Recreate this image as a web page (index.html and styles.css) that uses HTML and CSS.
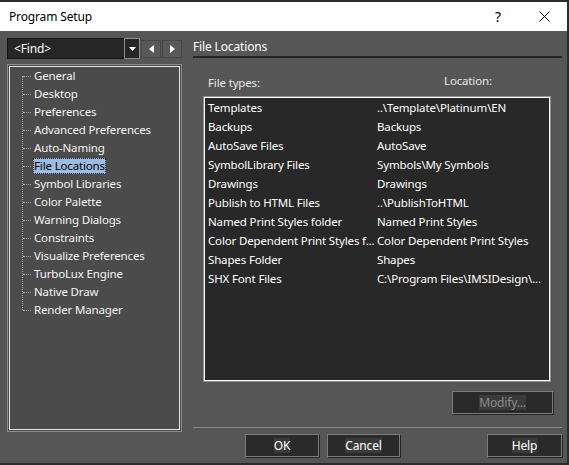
FILE: index.html
```html
<!DOCTYPE html>
<html lang="en">
<head>
  <meta charset="UTF-8" />
  <title>Program Setup</title>
  <link rel="stylesheet" href="styles.css">
</head>
<body>
  <div class="window">
    <div class="titlebar">
      <span class="title">Program Setup</span>
      <span class="cap-btn help">?</span>
      <span class="cap-btn close">
        <svg width="11" height="11" viewBox="0 0 11 11"><path d="M0.5 0.5 L10.5 10.5 M10.5 0.5 L0.5 10.5" stroke="#000" stroke-width="1" fill="none"/></svg>
      </span>
    </div>

    <div class="client">
      <div class="nav">
        <div class="findrow">
          <div class="combo">
            <span class="combo-text">&lt;Find&gt;</span>
            <span class="combo-btn">
              <svg width="7" height="4" viewBox="0 0 7 4"><path d="M0 0 H7 L3.5 4 Z" fill="#fff"/></svg>
            </span>
          </div>
          <span class="step">
            <svg width="5" height="8" viewBox="0 0 5 8"><path d="M5 0 V8 L0 4 Z" fill="#fff"/></svg>
          </span>
          <span class="step">
            <svg width="5" height="8" viewBox="0 0 5 8"><path d="M0 0 V8 L5 4 Z" fill="#fff"/></svg>
          </span>
        </div>

        <div class="tree">
          <ul>
            <li><span class="node">General</span></li>
            <li><span class="node">Desktop</span></li>
            <li><span class="node">Preferences</span></li>
            <li><span class="node">Advanced Preferences</span></li>
            <li><span class="node">Auto-Naming</span></li>
            <li><span class="node selected">File Locations</span></li>
            <li><span class="node">Symbol Libraries</span></li>
            <li><span class="node">Color Palette</span></li>
            <li><span class="node">Warning Dialogs</span></li>
            <li><span class="node">Constraints</span></li>
            <li><span class="node">Visualize Preferences</span></li>
            <li><span class="node">TurboLux Engine</span></li>
            <li><span class="node">Native Draw</span></li>
            <li><span class="node">Render Manager</span></li>
          </ul>
        </div>
      </div>

      <div class="page">
        <div class="page-title">File Locations</div>

        <div class="cols-head">
          <span class="head-types">File types:</span>
          <span class="head-loc">Location:</span>
        </div>

        <div class="listbox">
          <div class="row"><span>Templates</span><span>..\Template\Platinum\EN</span></div>
          <div class="row"><span>Backups</span><span>Backups</span></div>
          <div class="row"><span>AutoSave Files</span><span>AutoSave</span></div>
          <div class="row"><span>SymbolLibrary Files</span><span>Symbols\My Symbols</span></div>
          <div class="row"><span>Drawings</span><span>Drawings</span></div>
          <div class="row"><span>Publish to HTML Files</span><span>..\PublishToHTML</span></div>
          <div class="row"><span>Named Print Styles folder</span><span>Named Print Styles</span></div>
          <div class="row"><span>Color Dependent Print Styles f...</span><span>Color Dependent Print Styles</span></div>
          <div class="row"><span>Shapes Folder</span><span>Shapes</span></div>
          <div class="row"><span>SHX Font Files</span><span>C:\Program Files\IMSIDesign\...</span></div>
        </div>

        <div class="modify-row">
          <button class="btn btn-modify" disabled><span class="btn-cap">Modify...</span></button>
        </div>

        <div class="sep"></div>

        <div class="actions">
          <button class="btn btn-ok"><span class="btn-cap">OK</span></button>
          <button class="btn btn-cancel"><span class="btn-cap">Cancel</span></button>
          <button class="btn btn-help"><span class="btn-cap">Help</span></button>
        </div>
      </div>
    </div>
  </div>
</body>
</html>
```

FILE: styles.css
```css
body {
  margin: 0;
  background-color: #2c2c2c;
  font-family: "Noto Sans", "Open Sans", sans-serif;
  font-size: 11.5px;
  letter-spacing: -0.15px;
  color: #fff;
}

.window {
  width: 567px;
  height: 461px;
  margin-top: 2px;
  background-color: #565656;
  display: flex;
  flex-direction: column;
}

/* caption */
.titlebar {
  height: 29px;
  flex: none;
  background-color: #fff;
  color: #000;
  display: flex;
  align-items: center;
  padding-left: 9px;
  font-size: 12px;
}

.title {
  flex: 1;
}

.cap-btn {
  width: 46px;
  height: 29px;
  display: flex;
  align-items: center;
  justify-content: center;
}

.help {
  font-size: 14px;
}

/* dialog body */
.client {
  flex: 1;
  display: flex;
  gap: 11px;
  padding: 7px 5px 0 7px;
}

.nav {
  width: 175px;
  display: flex;
  flex-direction: column;
}

.findrow {
  height: 21px;
  display: flex;
  align-items: center;
  gap: 1px;
}

.combo {
  width: 134px;
  height: 21px;
  box-sizing: border-box;
  background-color: #262626;
  border: 1px solid #141414;
  display: flex;
}

.combo-text {
  flex: 1;
  padding-left: 6px;
  line-height: 19px;
  font-size: 12px;
}

.combo-btn {
  width: 16px;
  box-sizing: border-box;
  border: 1px solid #8c8c8c;
  margin: -1px -1px -1px 0;
  display: flex;
  align-items: center;
  justify-content: center;
}

.step {
  width: 20px;
  height: 18px;
  box-sizing: border-box;
  background-color: #595959;
  border: 1px solid #474747;
  display: flex;
  align-items: center;
  justify-content: center;
}

/* options tree */
.tree {
  margin-top: 5px;
  height: 368px;
  box-sizing: border-box;
  background-color: #4b4b4b;
  border: 1px solid #8c8c8c;
  box-shadow: inset 0 0 0 1px #4b4b4b, inset 0 0 0 2px #e4e4e4;
  padding: 2px;
}

.tree ul {
  list-style: none;
  margin: 0;
  padding: 0;
  position: relative;
}

.tree ul::before {
  content: "";
  position: absolute;
  left: 12px;
  top: 9px;
  height: 234px;
  border-left: 1px dotted #a8a8a8;
}

.tree li {
  position: relative;
  height: 18px;
  display: flex;
  align-items: center;
  padding-left: 23px;
}

.tree li::before {
  content: "";
  position: absolute;
  left: 13px;
  top: 9px;
  width: 8px;
  border-top: 1px dotted #a8a8a8;
}

.node {
  line-height: 14px;
  border: 1px solid transparent;
  color: #f4f4f4;
}

.node.selected {
  background-color: #9dbce4;
  color: #000;
  border: 1px dotted #000;
}

/* file locations page */
.page {
  width: 369px;
  display: flex;
  flex-direction: column;
}

.page-title {
  line-height: 18px;
  font-size: 12px;
  border-bottom: 2px solid #262626;
}

.cols-head {
  height: 38px;
  display: grid;
  grid-template-columns: 251px auto;
  align-items: start;
  color: #e8e8e8;
}

.head-types {
  padding-left: 15px;
  margin-top: 17px;
  line-height: 16px;
}

.head-loc {
  margin-top: 15px;
  line-height: 16px;
}

.listbox {
  margin-left: 10px;
  width: 348px;
  height: 286px;
  box-sizing: border-box;
  background-color: #282828;
  border: 1px solid #8f8f8f;
  box-shadow: inset 0 0 0 1px #fff;
  padding: 1px 0 0 4px;
}

.row {
  height: 19px;
  display: grid;
  grid-template-columns: 169px auto;
  align-items: center;
  white-space: nowrap;
}

.modify-row {
  margin-top: 9px;
  display: flex;
  justify-content: flex-end;
  padding-right: 9px;
}

.sep {
  margin-top: 13px;
  height: 1px;
  background-color: #8a8a8a;
}

.actions {
  margin-top: 6px;
  display: flex;
  padding-left: 52px;
}

/* push buttons */
.btn {
  height: 23px;
  box-sizing: border-box;
  background-color: #2a2a2a;
  border: 1px solid #7c7c7c;
  box-shadow: 1px 1px 0 #242424;
  font-family: inherit;
  font-size: 12px;
  letter-spacing: inherit;
  color: #fff;
  padding: 0;
  display: flex;
  align-items: center;
  justify-content: center;
}

.btn-cap {
  background-color: #3a3a3a;
  line-height: 15px;
}

.btn-modify {
  width: 101px;
  color: #8c8c8c;
}

.btn-ok {
  width: 74px;
}

.btn-cancel {
  width: 73px;
  margin-left: 8px;
}

.btn-help {
  width: 75px;
  margin-left: auto;
}
```
